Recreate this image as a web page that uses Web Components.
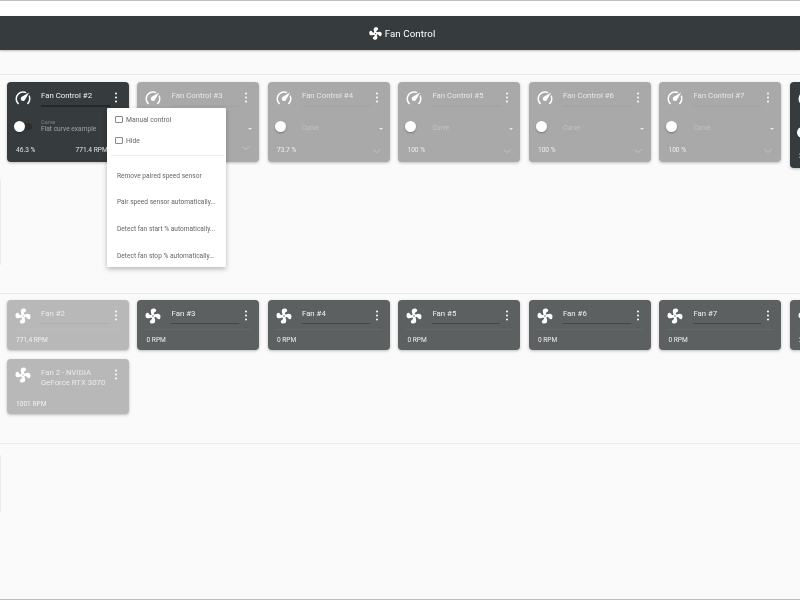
<!DOCTYPE html>
<html lang="en">
<head>
<meta charset="utf-8">
<title>Fan Control</title>
<style>
  html, body { margin: 0; height: 600px; overflow: hidden; background: #fafafa; }
  body { font-family: Roboto, "Liberation Sans", sans-serif; }
</style>
</head>
<body>
<template id="fan-icon">
  <style>:host { display: inline-flex; } svg { width: var(--size, 18px); height: var(--size, 18px); fill: currentColor; display: block; }</style>
  <svg viewBox="0 0 24 24"><path d="M12,11A1,1 0 0,0 11,12A1,1 0 0,0 12,13A1,1 0 0,0 13,12A1,1 0 0,0 12,11M12.5,2C17,2 17.11,5.57 14.75,6.75C13.76,7.24 13.32,8.29 13.13,9.22C13.61,9.42 14.03,9.73 14.35,10.13C18.05,8.13 22.03,8.92 22.03,12.5C22.03,17 18.46,17.1 17.28,14.73C16.78,13.74 15.72,13.3 14.79,13.11C14.59,13.59 14.28,14 13.88,14.34C15.87,18.03 15.08,22 11.5,22C7,22 6.91,18.42 9.27,17.24C10.25,16.75 10.69,15.71 10.89,14.79C10.4,14.59 9.97,14.27 9.65,13.87C5.96,15.85 2,15.07 2,11.5C2,7 5.56,6.89 6.74,9.26C7.24,10.25 8.29,10.68 9.22,10.87C9.41,10.39 9.73,9.97 10.14,9.65C8.15,5.96 8.94,2 12.5,2Z"/></svg>
</template>
<template id="gauge-icon">
  <style>:host { display: inline-flex; } svg { width: 18px; height: 18px; fill: currentColor; display: block; }</style>
  <svg viewBox="0 0 24 24"><path d="M12,16A3,3 0 0,1 9,13C9,11.88 9.61,10.9 10.5,10.39L20.21,4.77L14.68,14.35C14.18,15.33 13.17,16 12,16M12,3C13.81,3 15.5,3.5 16.97,4.32L14.87,5.53C14,5.19 13,5 12,5A8,8 0 0,0 4,13C4,15.21 4.89,17.21 6.34,18.65H6.35C6.74,19.04 6.74,19.67 6.35,20.06C5.96,20.45 5.32,20.45 4.93,20.07V20.07C3.12,18.26 2,15.76 2,13A10,10 0 0,1 12,3M22,13C22,15.76 20.88,18.26 19.07,20.07V20.07C18.68,20.45 18.05,20.45 17.66,20.06C17.27,19.67 17.27,19.04 17.66,18.65V18.65C19.11,17.2 20,15.2 20,13C20,12 19.81,11 19.46,10.1L20.67,8C21.5,9.5 22,11.18 22,13Z"/></svg>
</template>

<fan-page>
  <fan-bar slot="bar">Fan Control</fan-bar>
  <fan-section rail="85" pad="28">
    <control-card name="Fan Control #2" value="Flat curve example" percent="46.3 %" rpm="771.4 RPM"></control-card>
    <control-card faded name="Fan Control #3" percent="" rpm=""></control-card>
    <control-card faded name="Fan Control #4" percent="73.7 %" rpm=""></control-card>
    <control-card faded name="Fan Control #5" percent="100 %" rpm=""></control-card>
    <control-card faded name="Fan Control #6" percent="100 %" rpm=""></control-card>
    <control-card faded name="Fan Control #7" percent="100 %" rpm=""></control-card>
    <control-card tall name="Fan Control #8" percent="34.1 %" rpm=""></control-card>
    <context-menu slot="over"></context-menu>
  </fan-section>
  <fan-section style="--pt:6px">
    <speed-card faded name="Fan #2" rpm="771,4 RPM"></speed-card>
    <speed-card name="Fan #3" rpm="0 RPM"></speed-card>
    <speed-card name="Fan #4" rpm="0 RPM"></speed-card>
    <speed-card name="Fan #5" rpm="0 RPM"></speed-card>
    <speed-card name="Fan #6" rpm="0 RPM"></speed-card>
    <speed-card name="Fan #7" rpm="0 RPM"></speed-card>
    <speed-card name="Fan #8" rpm="2 RPM"></speed-card>
    <speed-card faded wide name="Fan 2 - NVIDIA GeForce RTX 3070" rpm="1001 RPM"></speed-card>
  </fan-section>
  <fan-section rail="57"></fan-section>
</fan-page>

<script>
function fromTemplate(id) {
  return document.getElementById(id).content.cloneNode(true);
}

class FanIcon extends HTMLElement {
  constructor() {
    super();
    this.attachShadow({ mode: 'open' }).appendChild(fromTemplate('fan-icon'));
  }
}

class GaugeIcon extends HTMLElement {
  constructor() {
    super();
    this.attachShadow({ mode: 'open' }).appendChild(fromTemplate('gauge-icon'));
  }
}

class FanPage extends HTMLElement {
  constructor() {
    super();
    this.attachShadow({ mode: 'open' }).innerHTML = `
      <style>
        :host { display: flex; flex-direction: column; height: 600px; box-sizing: border-box; overflow: hidden;
          border-top: 1px solid #bdbdbd; border-bottom: 1px solid #bdbdbd; filter: blur(.5px); }
        .top { background: #fff; padding-top: 15px; }
        .gap { height: 24px; flex: none; }
      </style>
      <div class="top"><slot name="bar"></slot></div>
      <div class="gap"></div>
      <slot></slot>`;
  }
}

class FanBar extends HTMLElement {
  constructor() {
    super();
    this.attachShadow({ mode: 'open' }).innerHTML = `
      <style>
        :host { display: flex; align-items: center; justify-content: center; gap: 2px; height: 34px; padding-left: 3px;
          background: #363c3d; color: #fff; font-size: 9.7px; letter-spacing: .1px;
          box-shadow: 0 1px 2px rgba(0,0,0,.25); }
        fan-icon { --size: 15px; }
      </style>
      <fan-icon></fan-icon><slot></slot>`;
  }
}

class FanSection extends HTMLElement {
  constructor() {
    super();
    this.attachShadow({ mode: 'open' }).innerHTML = `
      <style>
        :host { display: block; position: relative; flex: none; border-top: 1px solid #ebebeb; }
        .cards { display: grid; grid-template-columns: repeat(7, 121.7px); column-gap: 8.8px; row-gap: 9px;
          align-items: start; padding: var(--pt, 7px) 0 0 7px; width: 1000px; }
        .rail { width: 1px; background: #ececec; }
      </style>
      <div class="cards"><slot></slot></div>
      <div class="rail"></div>
      <slot name="over"></slot>`;
  }
  connectedCallback() {
    const rail = this.shadowRoot.querySelector('.rail');
    const cards = this.shadowRoot.querySelector('.cards');
    const railHeight = this.getAttribute('rail');
    if (railHeight) {
      rail.style.height = railHeight + 'px';
      rail.style.marginTop = (this.children.length ? 12 : 11) + 'px';
      rail.style.marginBottom = (this.getAttribute('pad') || 0) + 'px';
    } else {
      rail.style.display = 'none';
      cards.style.paddingBottom = '29px';
    }
    if (!this.children.length) cards.style.padding = '0';
  }
}

const dots = `<svg class="dots" viewBox="0 0 4 12"><circle cx="2" cy="1.6" r="1.1"/><circle cx="2" cy="6" r="1.1"/><circle cx="2" cy="10.4" r="1.1"/></svg>`;

const cardStyle = `
  :host { display: block; box-sizing: border-box; border-radius: 4px; color: #fff; overflow: hidden;
    background: var(--bg); --bg: #363c3d; --soft: rgba(255,255,255,.35); --line: #23282a;
    box-shadow: 0 1px 3px rgba(0,0,0,.25); }
  :host([faded]) { --bg: #a9a9a9; --soft: rgba(255,255,255,.28); --line: #a5a5a5; }
  .head { display: flex; align-items: flex-start; box-sizing: border-box; padding: 7px 8px 0 6.7px; }
  .head gauge-icon, .head fan-icon { flex: none; margin-right: 9.3px; }
  .name { flex: 1; min-width: 0; font-size: 7.8px; line-height: 10px; margin-right: 4px; color: rgba(255,255,255,.92); }
  .line { height: 1.5px; background: var(--line); }
  .dots { width: 4px; height: 11px; fill: currentColor; flex: none; margin: 3px 3px 0 0; }
  :host([faded]) .name { color: rgba(255,255,255,.72); }
`;

class ControlCard extends HTMLElement {
  constructor() {
    super();
    this.attachShadow({ mode: 'open' });
  }
  connectedCallback() {
    const name = this.getAttribute('name');
    const value = this.getAttribute('value');
    this.shadowRoot.innerHTML = `
      <style>${cardStyle}
        :host { height: 80px; }
        :host([tall]) { height: 86px; }
        :host([tall]) .mid { padding-top: 9px; }
        .head { height: 31px; }
        .name { padding-top: 2px; }
        .line { margin-top: 4px; }
        .mid { display: flex; align-items: center; padding: 3px 7px 0 7px; height: 20px; }
        .switch { position: relative; width: 18px; height: 7px; border-radius: 4px; background: var(--track); flex: none; margin-right: 9px; --track: #2a2f30; }
        :host([faded]) .switch { --track: transparent; }
        .knob { position: absolute; left: 0; top: -2px; width: 11px; height: 11px; border-radius: 50%; background: #fff; box-shadow: 0 1px 2px rgba(0,0,0,.3); }
        .field { flex: 1; min-width: 0; }
        .label { font-size: 5.5px; line-height: 6px; color: var(--soft); }
        .value { font-size: 6.6px; line-height: 9px; color: rgba(255,255,255,.5); white-space: nowrap; }
        :host([faded]) .value { color: rgba(255,255,255,.3); padding-top: 5px; }
        .arrow { width: 0; height: 0; border: 2px solid transparent; border-top: 2.5px solid rgba(255,255,255,.75); border-bottom: 0; margin: 5px 0 0 0; }
        .foot { display: flex; align-items: center; padding: 10px 9px 0 9px; font-size: 6.6px; line-height: 9px; color: rgba(255,255,255,.85); }
        :host([faded]) .foot { color: rgba(255,255,255,.8); }
        .pct { flex: 1; }
        .rpm { margin-right: 4px; }
        .chev { width: 8px; height: 4px; fill: none; stroke: rgba(255,255,255,.4); stroke-width: .8; }
      </style>
      <div class="head">
        <gauge-icon></gauge-icon>
        <div class="name">${name}<div class="line"></div></div>
        ${dots}
      </div>
      <div class="mid">
        <div class="switch"><div class="knob"></div></div>
        <div class="field">
          ${value ? `<div class="label">Curve</div><div class="value">${value}</div>` : '<div class="value">Curve</div>'}
        </div>
        <div class="arrow"></div>
      </div>
      <div class="foot">
        <span class="pct">${this.getAttribute('percent')}</span>
        <span class="rpm">${this.getAttribute('rpm')}</span>
        <svg class="chev" viewBox="0 0 8 4"><path d="M.5.5 4 3.5 7.5.5"/></svg>
      </div>`;
  }
}

class SpeedCard extends HTMLElement {
  constructor() {
    super();
    this.attachShadow({ mode: 'open' });
  }
  connectedCallback() {
    this.shadowRoot.innerHTML = `
      <style>${cardStyle}
        :host { height: 50px; --bg: #5c6061; --line: #414647; }
        :host([faded]) { --bg: #b8b8b8; --line: #aeaeae; }
        :host([wide]) { height: 55px; }
        :host([wide]) .head { height: 40px; }
        :host([wide]) .rule { display: none; }
        :host([wide]) .line { display: none; }
        :host([wide]) .rpm { padding-top: 1px; }
        .head { height: 29px; }
        .name { margin-right: 5px; padding-top: 2px; }
        .line { margin-top: 3.5px; }
        .rule { height: 1px; background: rgba(255,255,255,.06); margin: 0 8px; }
        .rpm { font-size: 6.6px; line-height: 9px; padding: 5.5px 8px 0 9px; color: rgba(255,255,255,.9); }
        :host([faded]) .rpm { color: rgba(255,255,255,.8); }
      </style>
      <div class="head">
        <fan-icon></fan-icon>
        <div class="name">${this.getAttribute('name')}<div class="line"></div></div>
        ${dots}
      </div>
      <div class="rule"></div>
      <div class="rpm">${this.getAttribute('rpm')}</div>`;
  }
}

class ContextMenu extends HTMLElement {
  constructor() {
    super();
    this.attachShadow({ mode: 'open' }).innerHTML = `
      <style>
        :host { position: absolute; left: 107px; top: 33px; width: 119px; height: 159px; background: #fff; color: #666;
          font-size: 6.6px; border-radius: 1px; box-shadow: 0 2px 5px rgba(0,0,0,.28); z-index: 2; }
        .check { display: flex; align-items: center; height: 21px; padding-left: 8px; font-size: 6.8px; }
        .check i { width: 5.5px; height: 5.5px; border: 1px solid #888; border-radius: 1px; margin-right: 3.5px; }
        .checks { padding-top: 1px; }
        hr { border: 0; border-top: 1px solid #ececec; margin: 4px 2px 0 4px; }
        .items { padding-top: 6.5px; }
        .item { height: 26.6px; display: flex; align-items: center; padding-left: 10px; white-space: nowrap; }
      </style>
      <div class="checks">
        <div class="check"><i></i>Manual control</div>
        <div class="check"><i></i>Hide</div>
      </div>
      <hr>
      <div class="items">
        <div class="item">Remove paired speed sensor</div>
        <div class="item">Pair speed sensor automatically...</div>
        <div class="item">Detect fan start % automatically...</div>
        <div class="item">Detect fan stop % automatically...</div>
      </div>`;
  }
}

customElements.define('fan-icon', FanIcon);
customElements.define('gauge-icon', GaugeIcon);
customElements.define('fan-page', FanPage);
customElements.define('fan-bar', FanBar);
customElements.define('fan-section', FanSection);
customElements.define('control-card', ControlCard);
customElements.define('speed-card', SpeedCard);
customElements.define('context-menu', ContextMenu);
</script>
</body>
</html>
